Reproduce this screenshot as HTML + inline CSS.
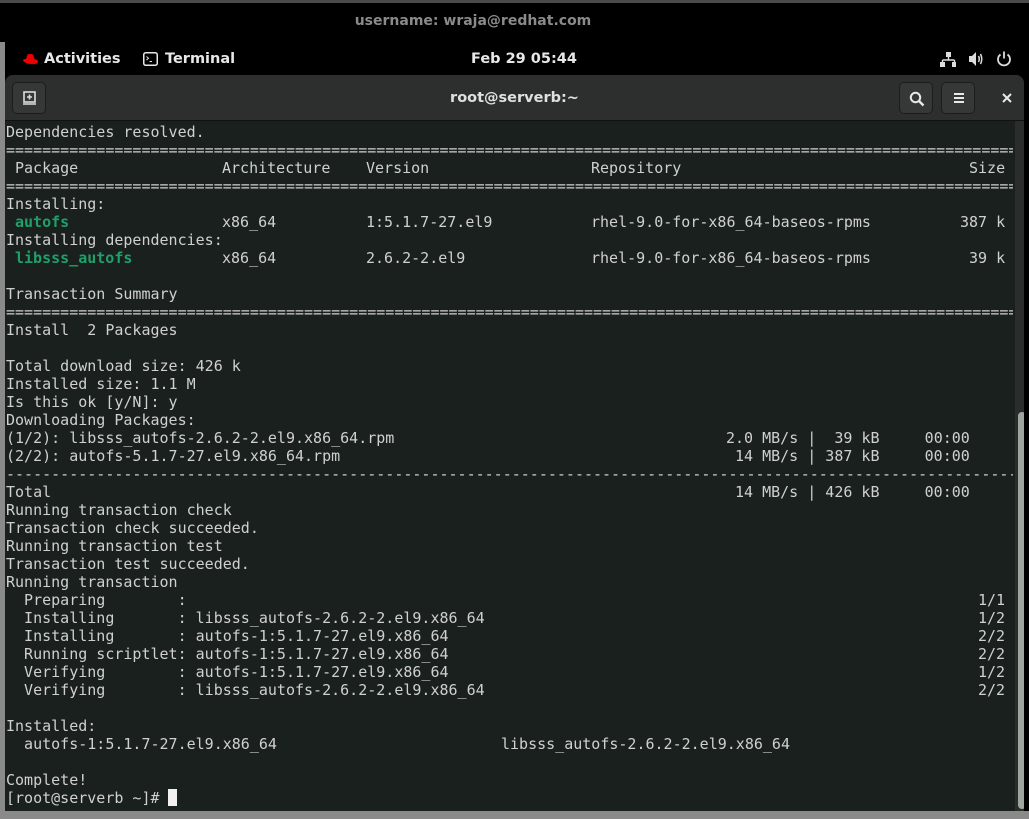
<!DOCTYPE html>
<html><head><meta charset="utf-8"><style>
*{margin:0;padding:0;box-sizing:border-box}
body{width:1029px;height:819px;overflow:hidden;background:#000;position:relative;font-family:"DejaVu Sans","Liberation Sans",sans-serif}
.topline{position:absolute;left:0;top:0;width:1029px;height:3px;background:#4a4a4a}
.user{position:absolute;top:13px;left:0;width:946px;text-align:center;color:#8a8a8a;font-weight:bold;font-size:14px}
.leftg{position:absolute;left:0;top:42px;width:5px;height:777px;background:#8a8a8a}
.botg{position:absolute;left:0;top:811px;width:1029px;height:8px;background:#8a8a8a}
.gn{position:absolute;top:51px;color:#e8e8e8;font-size:14.5px;font-weight:bold}
.win{position:absolute;left:5px;top:75px;width:1019px;height:736px;background:#1a201e;border-radius:8px 8px 0 0;overflow:hidden}
.hdr{position:absolute;left:0;top:0;width:1019px;height:46px;background:#2d2f2f;border-bottom:1px solid #111}
.btn{position:absolute;top:7px;width:34px;height:32px;background:#363838;border:1px solid #1c1c1c;border-radius:5px}
.title{position:absolute;top:15px;left:0;width:1019px;text-align:center;color:#e0e0e0;font-weight:bold;font-size:14.5px}
.sb{position:absolute;left:1010px;top:46px;width:14px;height:690px;background:#2b2c2c}
.th{position:absolute;left:3px;top:291px;width:8px;height:397px;background:#9ea59f;border-radius:4px}
.term{position:absolute;left:1px;top:48px;width:1007px;font-family:"DejaVu Sans Mono","Liberation Mono",monospace;font-size:15px;color:#d0d0d0}
.l{position:relative;height:18px;line-height:18px;white-space:pre;overflow:hidden}
.l span{position:absolute;top:0}
.g{color:#1fa06a;font-weight:bold}
.cur{position:absolute;left:163px;top:714px;width:9px;height:17px;background:#f0f0f0}
</style></head><body>
<div class="topline"></div>
<div class="user">username: wraja@redhat.com</div>
<div class="leftg"></div>
<div class="botg"></div>
<svg style="position:absolute;left:22px;top:53px" width="17" height="13" viewBox="0 0 17 13"><path d="M4 6 L5.5 1.5 Q8 0.5 11 1.5 L12.5 6 Q16.5 7 16 9 Q14 12 8 11 Q2 10 1 7.5 Q1 6 4 6Z" fill="#e00"/></svg>
<div class="gn" style="left:44px">Activities</div>
<svg style="position:absolute;left:143px;top:52px" width="15" height="14"><rect x="0.75" y="0.75" width="13.5" height="12.5" rx="2" fill="none" stroke="#e8e8e8" stroke-width="1.5"/><path d="M3.5 4.5 L5.5 6.3 L3.5 8" stroke="#e8e8e8" fill="none"/><path d="M6.5 9.5 H9" stroke="#e8e8e8"/></svg>
<div class="gn" style="left:165px">Terminal</div>
<div class="gn" style="left:471px">Feb 29  05:44</div>
<svg style="position:absolute;left:940px;top:52px" width="16" height="15"><rect x="6" y="0" width="5" height="5" fill="#ddd"/><path d="M8.5 5 V8 M2.5 8 H14.5 M2.5 8 V10 M14.5 8 V10" stroke="#ddd" stroke-width="1.4" fill="none"/><rect x="0" y="10" width="5" height="5" fill="#ddd"/><rect x="12" y="10" width="5" height="5" fill="#ddd"/></svg>
<svg style="position:absolute;left:968px;top:51px" width="17" height="16"><path d="M1 5 H4 L8 1 V15 L4 11 H1Z" fill="#ddd"/><path d="M10.5 5 Q12 8 10.5 11 M12.5 3 Q15 8 12.5 13" stroke="#ddd" stroke-width="1.5" fill="none"/></svg>
<svg style="position:absolute;left:996px;top:51px" width="16" height="16"><path d="M4.5 3.5 A6 6 0 1 0 11.5 3.5" stroke="#ddd" stroke-width="1.8" fill="none"/><path d="M8 0.5 V7.5" stroke="#ddd" stroke-width="1.8"/></svg>
<div class="win">
<div class="hdr">
<div class="btn" style="left:7px"><svg style="position:absolute;left:10px;top:8px" width="14" height="14"><rect x="1" y="1" width="11" height="10" fill="none" stroke="#ddd" stroke-width="1.6"/><path d="M6.5 3.5 V8.5 M4 6 H9" stroke="#ddd" stroke-width="1.6"/><path d="M0 13 H13" stroke="#ddd" stroke-width="1.6"/></svg></div>
<div class="title">root@serverb:~</div>
<div class="btn" style="left:894px"><svg style="position:absolute;left:9px;top:8px" width="16" height="16"><circle cx="6.5" cy="6.5" r="4.7" fill="none" stroke="#e8e8e8" stroke-width="2"/><path d="M10 10 L14.5 14.5" stroke="#e8e8e8" stroke-width="2.4"/></svg></div>
<div class="btn" style="left:936px"><svg style="position:absolute;left:11px;top:9px" width="12" height="12"><path d="M1 2 H11 M1 6 H11 M1 10 H11" stroke="#e8e8e8" stroke-width="2"/></svg></div>
<svg style="position:absolute;left:997px;top:18px" width="10" height="10"><path d="M1 1 L9 9 M9 1 L1 9" stroke="#e8e8e8" stroke-width="2"/></svg>
</div>
<div class="sb"><div class="th"></div></div>
<div class="term">
<div class="l">Dependencies resolved.</div>
<div class="l">========================================================================================================================</div>
<div class="l"><span style="left:9px">Package</span><span style="left:216px">Architecture</span><span style="left:360px">Version</span><span style="left:585px">Repository</span><span style="left:963px">Size</span></div>
<div class="l">========================================================================================================================</div>
<div class="l">Installing:</div>
<div class="l"><span class="g" style="left:9px">autofs</span><span style="left:216px">x86_64</span><span style="left:360px">1:5.1.7-27.el9</span><span style="left:585px">rhel-9.0-for-x86_64-baseos-rpms</span><span style="left:954px">387 k</span></div>
<div class="l">Installing dependencies:</div>
<div class="l"><span class="g" style="left:9px">libsss_autofs</span><span style="left:216px">x86_64</span><span style="left:360px">2.6.2-2.el9</span><span style="left:585px">rhel-9.0-for-x86_64-baseos-rpms</span><span style="left:963px">39 k</span></div>
<div class="l"> </div>
<div class="l">Transaction Summary</div>
<div class="l">========================================================================================================================</div>
<div class="l">Install  2 Packages</div>
<div class="l"> </div>
<div class="l">Total download size: 426 k</div>
<div class="l">Installed size: 1.1 M</div>
<div class="l">Is this ok [y/N]: y</div>
<div class="l">Downloading Packages:</div>
<div class="l">(1/2): libsss_autofs-2.6.2-2.el9.x86_64.rpm<span style="left:720px">2.0 MB/s |  39 kB     00:00</span></div>
<div class="l">(2/2): autofs-5.1.7-27.el9.x86_64.rpm<span style="left:729px">14 MB/s | 387 kB     00:00</span></div>
<div class="l">------------------------------------------------------------------------------------------------------------------------</div>
<div class="l">Total<span style="left:729px">14 MB/s | 426 kB     00:00</span></div>
<div class="l">Running transaction check</div>
<div class="l">Transaction check succeeded.</div>
<div class="l">Running transaction test</div>
<div class="l">Transaction test succeeded.</div>
<div class="l">Running transaction</div>
<div class="l">  Preparing        :<span style="left:972px">1/1</span></div>
<div class="l">  Installing       : libsss_autofs-2.6.2-2.el9.x86_64<span style="left:972px">1/2</span></div>
<div class="l">  Installing       : autofs-1:5.1.7-27.el9.x86_64<span style="left:972px">2/2</span></div>
<div class="l">  Running scriptlet: autofs-1:5.1.7-27.el9.x86_64<span style="left:972px">2/2</span></div>
<div class="l">  Verifying        : autofs-1:5.1.7-27.el9.x86_64<span style="left:972px">1/2</span></div>
<div class="l">  Verifying        : libsss_autofs-2.6.2-2.el9.x86_64<span style="left:972px">2/2</span></div>
<div class="l"> </div>
<div class="l">Installed:</div>
<div class="l">  autofs-1:5.1.7-27.el9.x86_64<span style="left:495px">libsss_autofs-2.6.2-2.el9.x86_64</span></div>
<div class="l"> </div>
<div class="l">Complete!</div>
<div class="l">[root@serverb ~]# </div>
</div>
<div class="cur"></div>
</div>
</body></html>
